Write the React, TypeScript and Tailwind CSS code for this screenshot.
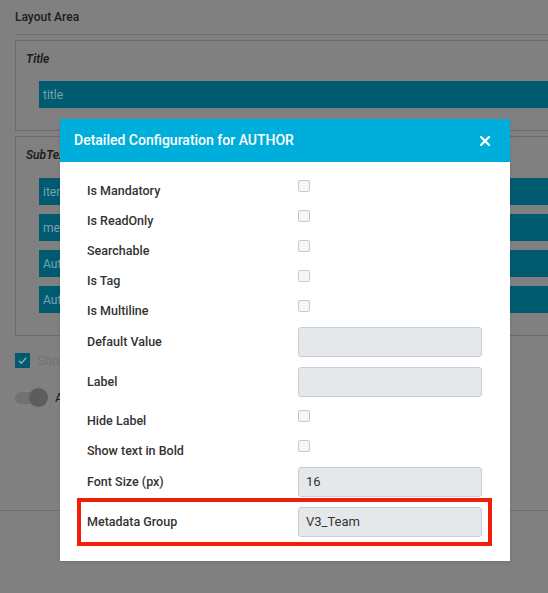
import React from "react";

type Row =
  | { kind: "check"; label: string }
  | { kind: "input"; label: string; value?: string; highlight?: boolean };

const rows: Row[] = [
  { kind: "check", label: "Is Mandatory" },
  { kind: "check", label: "Is ReadOnly" },
  { kind: "check", label: "Searchable" },
  { kind: "check", label: "Is Tag" },
  { kind: "check", label: "Is Multiline" },
  { kind: "input", label: "Default Value" },
  { kind: "input", label: "Label" },
  { kind: "check", label: "Hide Label" },
  { kind: "check", label: "Show text in Bold" },
  { kind: "input", label: "Font Size (px)", value: "16" },
  { kind: "input", label: "Metadata Group", value: "V3_Team", highlight: true },
];

function Checkbox() {
  return <span className="block w-[12px] h-[12px] rounded-[2px] border border-[#cbcbcb] bg-[#f6f6f6]" />;
}

function FieldRow({ row }: { row: Row }) {
  if (row.kind === "check") {
    return (
      <div className="flex items-start h-[30px] px-[6px]">
        <div className="w-[211px] mt-[11px] text-[12.5px] leading-[16px] font-medium text-[#333]">{row.label}</div>
        <div className="mt-[8px]">
          <Checkbox />
        </div>
      </div>
    );
  }
  return (
    <div
      className={
        "flex items-center h-[40px] px-[6px] " +
        (row.highlight ? "outline-4 outline-solid outline-[#f21e0c]" : "")
      }
    >
      <div className="w-[211px] text-[12.5px] leading-[16px] font-medium text-[#333]">{row.label}</div>
      <div className="w-[184px] h-[30px] flex items-center px-[7px] bg-[#e5e8eb] border border-[#c9cfd5] rounded-[3px] text-[13px] text-[#333]">
        {row.value}
      </div>
    </div>
  );
}

function Bar({ text }: { text: string }) {
  return (
    <div className="h-[27px] w-[600px] bg-[#005a70] flex items-center pl-[4px] text-[12px] text-[#7fa2ae]">
      {text}
    </div>
  );
}

export default function App() {
  return (
    <div
      className="relative w-[548px] h-[593px] overflow-hidden bg-[#808080]"
      style={{ fontFamily: "Roboto, 'Noto Sans', sans-serif" }}
    >
      {/* page behind the dialog, dimmed */}
      <div className="pl-[15px]">
        <div className="h-[34px] flex items-center text-[12px] font-medium text-[#1c1c1c]">Layout Area</div>
        <div className="h-px w-[600px] bg-[#6c6c6c]" />

        <div className="mt-[5px] w-[600px] border border-[#6a6a6a] pl-[10px] pt-[10px] pb-[22px]">
          <div className="text-[12px] leading-[16px] italic font-semibold text-[#1c1c1c]">Title</div>
          <div className="mt-[14px] ml-[13px]">
            <Bar text="title" />
          </div>
        </div>

        <div className="mt-[5px] w-[600px] border border-[#6a6a6a] pl-[10px] pt-[10px] pb-[22px]">
          <div className="text-[12px] leading-[16px] italic font-semibold text-[#1c1c1c]">SubText</div>
          <div className="mt-[15px] ml-[13px] flex flex-col gap-[9px]">
            <Bar text="item" />
            <Bar text="meta" />
            <Bar text="Author" />
            <Bar text="Author" />
          </div>
        </div>

        <div className="mt-[17px] h-[15px] flex items-center gap-[7px]">
          <span className="w-[15px] h-[15px] bg-[#005a70] flex items-center justify-center">
            <svg width="11" height="11" viewBox="0 0 12 12" fill="none">
              <path d="M2 6.3 L4.8 9 L10 3" stroke="#8fb0bb" strokeWidth="1.4" />
            </svg>
          </span>
          <span className="text-[13px] text-[#737373]">Show</span>
        </div>

        <div className="mt-[20px] h-[19px] flex items-center gap-[7px]">
          <span className="relative w-[33px] h-[19px] flex items-center">
            <span className="w-[30px] h-[12px] rounded-full bg-[#717171]" />
            <span className="absolute left-[14px] top-0 w-[19px] h-[19px] rounded-full bg-[#5d5d5d]" />
          </span>
          <span className="text-[13px] text-[#1c1c1c]">Auto</span>
        </div>
      </div>
      <div className="mt-[103px] h-px w-full bg-[#6c6c6c]" />

      {/* dialog */}
      <div className="absolute left-[60px] top-[119px] w-[450px] bg-white shadow-sm">
        <div className="h-[43px] bg-[#00aedb] flex items-center justify-between pl-[14px] pr-[20px]">
          <span className="text-[14px] font-medium text-white">Detailed Configuration for AUTHOR</span>
          <svg width="10" height="10" viewBox="0 0 10 10">
            <path d="M1 1 L9 9 M9 1 L1 9" stroke="white" strokeWidth="2.2" strokeLinecap="square" />
          </svg>
        </div>
        <div className="pt-[10px] pb-[19px] pl-[21px] pr-[22px]">
          {rows.map((r) => (
            <FieldRow key={r.label} row={r} />
          ))}
        </div>
      </div>
    </div>
  );
}
